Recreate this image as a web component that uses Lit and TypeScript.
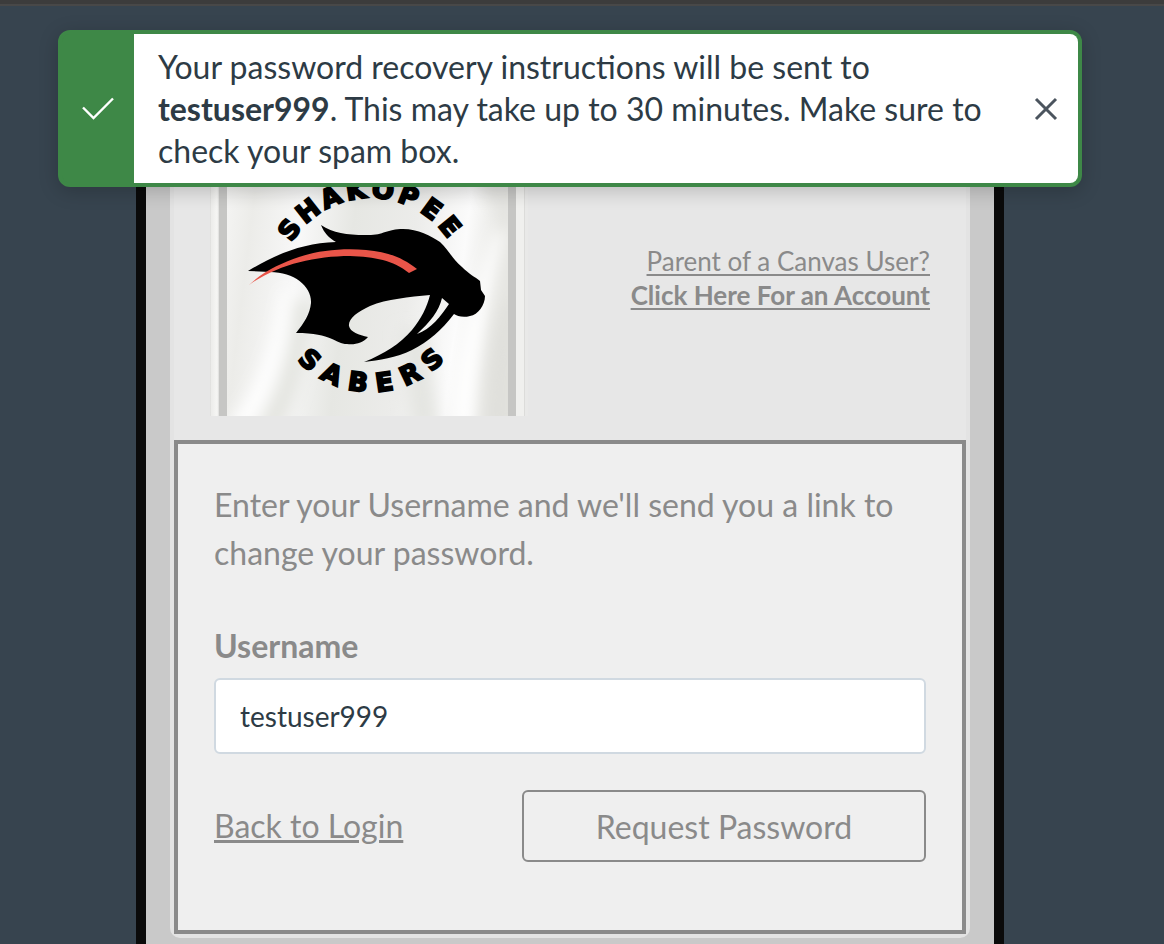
import { LitElement, html, css } from "lit";
import { customElement, state } from "lit/decorators.js";

@customElement("school-logo")
class SchoolLogo extends LitElement {
  static styles = css`
    :host { display: block; }
    .logo { display: block; width: 318px; height: auto; }
    .arc { font-family: "DejaVu Sans", sans-serif; font-weight: 700; font-size: 26px; stroke: #000; stroke-width: 2px; text-anchor: middle; }
  `;

  render() {
    return html`
      <svg class="logo" viewBox="210 140 318 276" role="img" aria-label="Shakopee Sabers">
        <defs>
          <linearGradient id="satin" x1="0" x2="1" y1="0" y2="0.12">
            <stop offset="0" stop-color="#f6f6f5" />
            <stop offset="0.12" stop-color="#ecece9" />
            <stop offset="0.3" stop-color="#f8f8f8" />
            <stop offset="0.48" stop-color="#e6e7e3" />
            <stop offset="0.7" stop-color="#ececea" />
            <stop offset="0.88" stop-color="#fbfbfb" />
            <stop offset="1" stop-color="#e6e6e2" />
          </linearGradient>
          <linearGradient id="edge" x1="0" x2="1" y1="0" y2="0">
            <stop offset="0" stop-color="#d9d9d7" />
            <stop offset="0.12" stop-color="#ececea" />
            <stop offset="0.8" stop-color="#f6f6f4" />
            <stop offset="1" stop-color="#dcdcda" />
          </linearGradient>
          <filter id="fold" x="-60%" y="-20%" width="220%" height="140%"><feGaussianBlur stdDeviation="8" /></filter>
          <clipPath id="cloth"><rect x="227" y="140" width="281" height="276" /></clipPath>
          <path id="upper" d="M278 291 A93 93 0 0 1 464 291" />
          <path id="lower" d="M270 291 A101 101 0 0 0 472 291" />
        </defs>
        <rect x="210" y="140" width="318" height="276" fill="#e9e9e8" />
        <rect x="210" y="140" width="9" height="276" fill="url(#edge)" />
        <rect x="227" y="140" width="281" height="276" fill="url(#satin)" />
        <g clip-path="url(#cloth)">
          <g filter="url(#fold)">
            <path d="M255 430 Q292 370 294 300 L312 300 Q306 380 280 430Z" fill="#e3e4df" />
            <path d="M225 430 Q272 370 282 290 L292 290 Q288 370 250 430Z" fill="#fff" />
            <path d="M452 430 Q452 340 496 230 L506 230 Q480 320 474 430Z" fill="#fff" />
            <path d="M484 430 Q484 350 506 300 L516 300 L516 430Z" fill="#e0e0dc" />
            <path d="M400 330 L425 330 L440 430 L412 430Z" fill="#e4e5e1" />
            <path d="M480 170 L510 170 L510 220 Q490 210 480 170Z" fill="#e4e4e1" />
          </g>
        </g>
        <rect x="219" y="140" width="8" height="276" fill="#c6c6c4" />
        <rect x="508" y="140" width="8" height="276" fill="#c6c6c4" />
        <rect x="516" y="140" width="8" height="276" fill="#f0f0ee" />
        <rect x="524" y="140" width="1" height="276" fill="#dcdcda" />
        <text class="arc" x="0 24 48 72 97 121 145 168"><textPath href="#upper" startOffset="60">SHAKOPEE</textPath></text>
        <text class="arc" x="0 29 59 88 118 147"><textPath href="#lower" startOffset="85">SABERS</textPath></text>
        <path d="M248 271 C276 254 303 243 336 242 C329 238 324 233 321 225 C333 233 347 235 365 235 C383 236 386 229 403 229 C418 229 431 236 440 242 C449 250 452 259 462 267 C469 274 475 277 480 281 L481 290 L485 296 C485 305 478 315 470 316 C463 318 457 316 454 314 C442 330 428 342 412 350 C396 358 379 360 364 362 C384 354 400 344 412 330 C421 319 427 307 430 295 C409 297 387 299 370 306 C357 312 348 319 349 326 C350 332 359 335 368 337 C363 343 355 345 347 344 C335 344 333 333 296 333 C304 323 310 314 311 303 C312 287 295 272 270 272Z" />
        <path d="M442 298 C439 311 430 322 417 334 C431 329 441 316 449 304Z" fill="#f3f3f1" />
        <path d="M249 285 C265 270 282 263 299 257 C319 250 345 248 366 250 C389 252 403 258 417 269 L409 273 C393 260 375 257 350 256 C314 256 277 265 249 285Z" fill="#e95549" />
      </svg>
    `;
  }
}

@customElement("app-root")
class AppRoot extends LitElement {
  static styles = css`
    * { box-sizing: border-box; }
    :host { display: block; font-family: Lato, sans-serif; }
    .page { position: relative; display: flex; flex-direction: column; align-items: center; min-height: 100vh; padding: 0 24px 0 0; background: #37444f; }
    .topbar { align-self: stretch; height: 6px; margin-right: -24px; background: #3c3c3c; border-bottom: 2px solid #484848; }
    .frame { flex: 1; width: calc(100% - 32px); max-width: 868px; margin-top: 72px; padding: 24px 24px 6px; background: #c9c9c9; border: solid #0a0a0a; border-width: 10px 10px 0; }
    .card { border: 4px solid #e3e3e3; border-radius: 10px; background: #e7e7e7; }
    .header { display: flex; align-items: center; justify-content: space-between; padding: 24px 36px; }
    .signup { color: #8a8a8a; font-size: 26px; line-height: 34px; text-align: right; text-underline-offset: 3px; }
    .signup b { display: block; }
    .panel { padding: 37px 36px 68px; border: 4px solid #8a8a8a; background: #efefef; color: #8a8a8a; font-size: 32px; line-height: 48px; }
    .intro { margin: 0 0 45px; }
    .label { display: block; margin-bottom: 8px; font-weight: 700; }
    .field { display: block; width: 100%; height: 76px; padding: 0 24px; border: 2px solid #d0d9e1; border-radius: 6px; background: #fff; color: #2d3b45; font: 28px Lato, sans-serif; outline: none; }
    .actions { display: flex; align-items: center; justify-content: space-between; margin-top: 36px; }
    .back { color: inherit; }
    .submit { width: 404px; height: 72px; border: 2px solid #8a8a8a; border-radius: 6px; background: transparent; color: inherit; font: 32px Lato, sans-serif; }
    .toast-layer { position: absolute; top: 30px; left: 0; right: 24px; display: flex; justify-content: center; }
    .toast { display: flex; width: calc(100% - 32px); max-width: 1024px; border: 4px solid #3e8847; border-radius: 12px; background: #3e8847; box-shadow: 0 4px 20px rgba(0, 0, 0, 0.2); }
    .status { display: flex; flex: none; align-items: center; justify-content: center; width: 72px; }
    .body { display: flex; flex: 1; align-items: center; justify-content: space-between; padding: 12px 16px 11px 24px; border-radius: 0 8px 8px 0; background: #fff; color: #2d3b45; }
    .message { max-width: 836px; margin: 0; font-size: 32px; line-height: 42px; }
    .close { display: flex; flex: none; padding: 4px; border: 0; background: none; }
  `;

  @state() private open = true;
  @state() private username = "testuser999";

  private onInput(e: Event) {
    this.username = (e.target as HTMLInputElement).value;
  }

  private renderToast() {
    return html`
      <div class="toast-layer">
        <div class="toast" role="alert">
          <div class="status">
            <svg width="32" height="24" viewBox="0 0 32 24" fill="none" stroke="#fff" stroke-width="2.4" aria-hidden="true"><path d="M1 10.5 L11.5 21 L31 1.5" /></svg>
          </div>
          <div class="body">
            <p class="message">Your password recovery instructions will be sent to <b>testuser999</b>. This may take up to 30 minutes. Make sure to check your spam box.</p>
            <button class="close" aria-label="Close" @click=${() => (this.open = false)}>
              <svg width="24" height="24" viewBox="0 0 24 24" fill="none" stroke="#4b545e" stroke-width="3" aria-hidden="true"><path d="M2 2 L22 22 M22 2 L2 22" /></svg>
            </button>
          </div>
        </div>
      </div>
    `;
  }

  render() {
    return html`
      <div class="page">
        <div class="topbar"></div>
        <main class="frame">
          <div class="card">
            <header class="header">
              <school-logo></school-logo>
              <a class="signup" href="#register">Parent of a Canvas User?<b>Click Here For an Account</b></a>
            </header>
            <form class="panel" @submit=${(e: Event) => e.preventDefault()}>
              <p class="intro">Enter your Username and we'll send you a link to change your password.</p>
              <label class="label" for="username">Username</label>
              <input class="field" id="username" type="text" .value=${this.username} @input=${this.onInput} />
              <div class="actions">
                <a class="back" href="#login">Back to Login</a>
                <button class="submit" type="submit">Request Password</button>
              </div>
            </form>
          </div>
        </main>
        ${this.open ? this.renderToast() : ""}
      </div>
    `;
  }
}
